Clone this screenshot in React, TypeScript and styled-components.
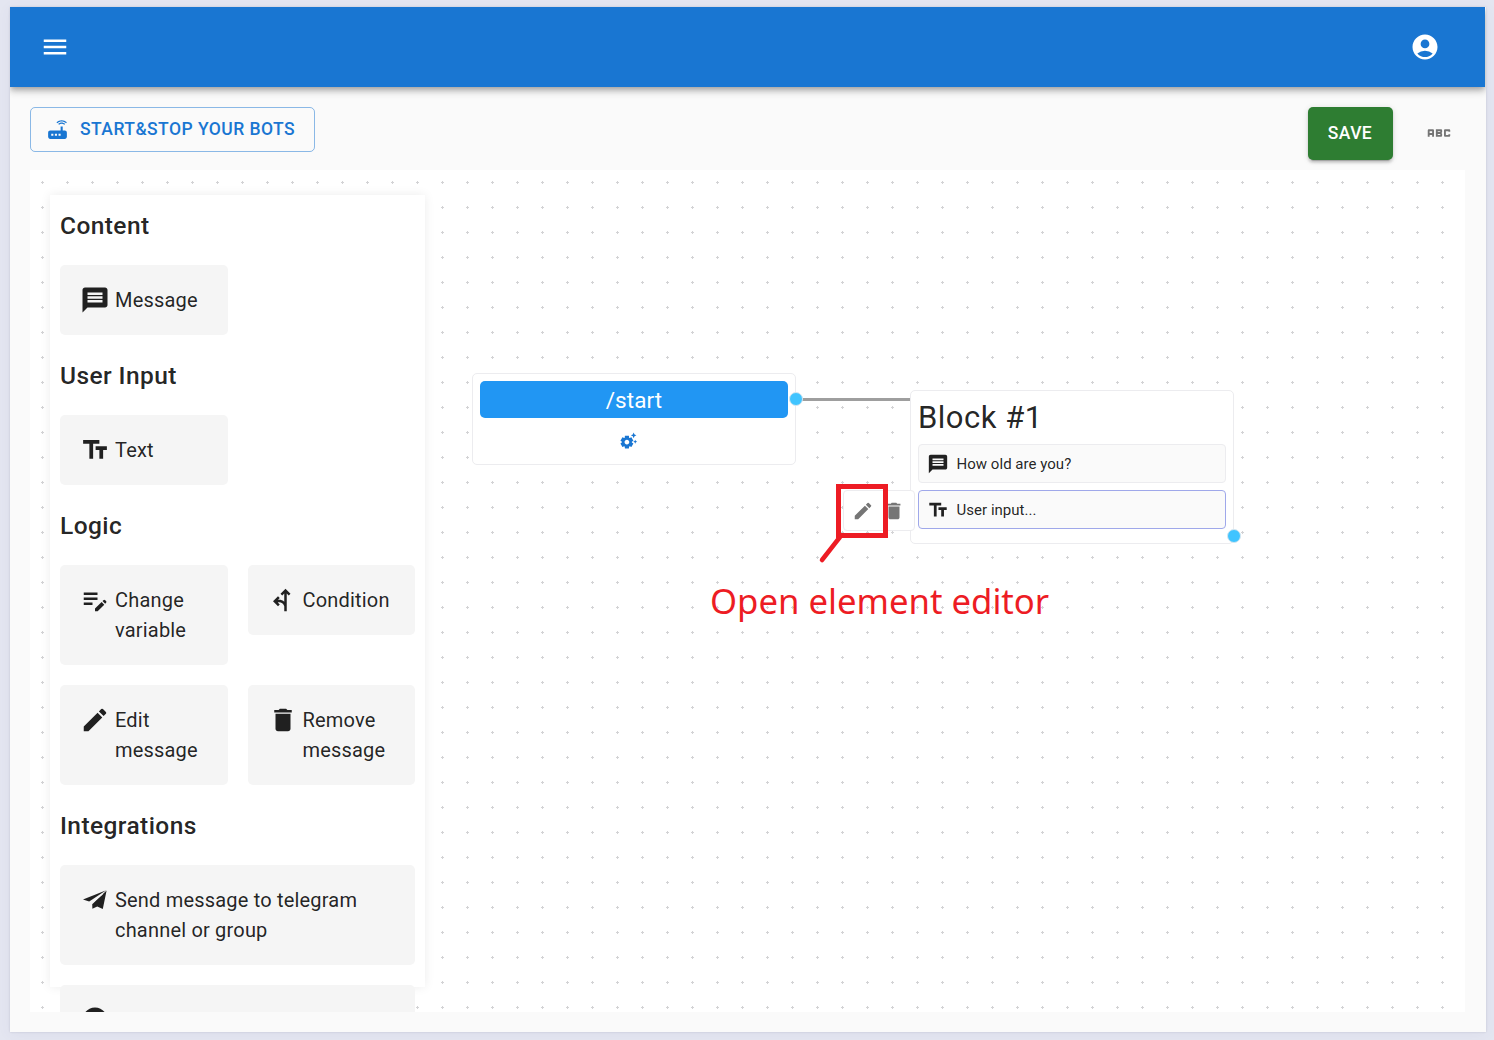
import React from 'react';
import styled, { createGlobalStyle } from 'styled-components';
import {
  MdMenu, MdAccountCircle, MdRouter, MdAbc, MdMessage, MdTextFields, MdEditNote,
  MdForkLeft, MdEdit, MdDelete, MdSettingsSuggest, MdError,
} from 'react-icons/md';

const GlobalStyle = createGlobalStyle`
  *, *::before, *::after { box-sizing: border-box; }
  html, body { margin: 0; height: 100%; }
  body {
    font-family: Roboto, "Liberation Sans", sans-serif;
    color: rgba(0, 0, 0, 0.87);
    overflow: hidden;
  }
  svg { display: block; flex: none; }
`;

const Page = styled.div`
  width: 1494px;
  height: 1040px;
  padding: 7px 8px 8px 10px;
  background: #e4e6f1;
  overflow: hidden;
`;

const Frame = styled.div`
  height: 1025px;
  display: flex;
  flex-direction: column;
  overflow: hidden;
  background: #fafafa;
  box-shadow: 0 0 2px rgba(90, 90, 120, 0.22), 0 2px 14px rgba(90, 90, 140, 0.06);
`;

const AppBar = styled.header`
  height: 80px;
  flex: none;
  margin-right: 1px;
  padding: 0 45px 0 30px;
  display: flex;
  align-items: center;
  justify-content: space-between;
  color: #fff;
  background: #1976d2;
  box-shadow: 0 2.5px 5px -1px rgba(0, 0, 0, 0.2), 0 5px 6px rgba(0, 0, 0, 0.14), 0 1px 12px rgba(0, 0, 0, 0.12);
`;

const Toolbar = styled.div`
  flex: none;
  height: 83px;
  padding: 20px 20px 0;
  display: flex;
  align-items: flex-start;
  justify-content: space-between;
`;

const OutlinedButton = styled.button`
  height: 45px;
  width: 285px;
  padding: 0 0 0 14px;
  display: flex;
  align-items: center;
  gap: 10px;
  border: 1px solid rgba(25, 118, 210, 0.5);
  border-radius: 5px;
  background: transparent;
  color: #1976d2;
  font: 500 17.5px/43px Roboto, sans-serif;
  letter-spacing: 0.45px;
  white-space: nowrap;
`;

const ToolbarActions = styled.div`
  display: flex;
  align-items: center;
  gap: 31px;
  padding-right: 12px;
`;

const SaveButton = styled.button`
  width: 85px;
  height: 53px;
  padding: 0 1px 0 0;
  border: 0;
  border-radius: 5px;
  background: #2e7d32;
  color: #fff;
  font: 500 17.5px/51px Roboto, sans-serif;
  letter-spacing: 0.4px;
  box-shadow: 0 4px 1px -3px rgba(0, 0, 0, 0.2), 0 2.5px 2.5px rgba(0, 0, 0, 0.14), 0 1px 6px rgba(0, 0, 0, 0.12);
`;

const VariablesButton = styled.span`
  display: inline-flex;
  padding-bottom: 2px;
  color: #757575;
`;

const Canvas = styled.main`
  position: relative;
  flex: none;
  width: 1435px;
  height: 842px;
  margin-left: 20px;
  padding: 25px 20px;
  overflow: hidden;
  background: #fff;
`;

const DotGrid = styled.svg`
  position: absolute;
  inset: 0;
  width: 100%;
  height: 100%;
`;

const Palette = styled.aside`
  position: relative;
  width: 375px;
  height: 792px;
  padding: 10px;
  background: #fff;
  box-shadow: 0 0 10px rgba(0, 0, 0, 0.08);
`;

const SectionTitle = styled.h2`
  margin: 0;
  height: 40px;
  font: 500 24.5px/41px Roboto, sans-serif;
  letter-spacing: 0.42px;
`;

const Section = styled.section`
  margin-bottom: 20px;
`;

const Tiles = styled.div`
  display: grid;
  grid-template-columns: 1fr 1fr;
  gap: 20px;
  align-items: start;
  padding-top: 20px;
`;

const Tile = styled.div<{ $wide?: boolean }>`
  grid-column: ${(p) => (p.$wide ? '1 / -1' : 'auto')};
  display: flex;
  gap: 5px;
  padding: 20px;
  border-radius: 5px;
  background: #f5f5f5;
`;

const TileIcon = styled.span`
  display: flex;
  height: 30px;
  align-items: center;
`;

const TileLabel = styled.span`
  font-size: 20px;
  line-height: 30px;
  letter-spacing: 0.19px;
`;

const Node = styled.div<{ $x: number; $y: number; $w: number; $h: number }>`
  position: absolute;
  left: ${(p) => p.$x}px;
  top: ${(p) => p.$y}px;
  width: ${(p) => p.$w}px;
  height: ${(p) => p.$h}px;
  padding: 7px;
  border: 1px solid #ececef;
  border-radius: 5px;
  background: #fff;
`;

const StartLabel = styled.div`
  height: 37px;
  border-radius: 5px;
  background: #2196f3;
  color: #fff;
  text-align: center;
  font-size: 22.5px;
  line-height: 39px;
  letter-spacing: 0.1px;
`;

const StartSettings = styled.div`
  display: flex;
  justify-content: center;
  padding: 13px 12px 0 0;
  color: #1976d2;
`;

const BlockTitle = styled.h3`
  margin: 0;
  height: 46px;
  font-size: 31px;
  font-weight: 400;
  line-height: 40px;
  letter-spacing: 0.5px;
`;

const BlockItem = styled.div<{ $selected?: boolean }>`
  height: 39px;
  margin-bottom: 7px;
  padding: 0 8px;
  display: flex;
  align-items: center;
  gap: 7.5px;
  border: 1px solid ${(p) => (p.$selected ? '#9fa8ea' : '#ececef')};
  border-radius: 4px;
  background: #fafafa;
  font-size: 15px;
  letter-spacing: 0.03px;
`;

const Port = styled.span<{ $x: number; $y: number }>`
  position: absolute;
  left: ${(p) => p.$x}px;
  top: ${(p) => p.$y}px;
  width: 14px;
  height: 14px;
  border: 1px solid #d4e6f0;
  border-radius: 50%;
  background: #40c4ff;
`;

const Edge = styled.span`
  position: absolute;
  left: 772px;
  top: 228px;
  width: 109px;
  height: 3px;
  background: #9e9e9e;
`;

const ItemActions = styled.div`
  position: absolute;
  left: 813px;
  top: 320px;
  width: 72px;
  height: 41px;
  padding-left: 8px;
  display: flex;
  align-items: center;
  gap: 9px;
  border: 1px solid #ececef;
  border-radius: 4px;
  background: #fff;
  color: #757575;
`;

const Highlight = styled.span`
  position: absolute;
  left: 806px;
  top: 314px;
  width: 52px;
  height: 54px;
  border: 5px solid #ed1c24;
`;

const Pointer = styled.svg`
  position: absolute;
  left: 786px;
  top: 362px;
`;

const Caption = styled.p`
  position: absolute;
  left: 680px;
  top: 407px;
  margin: 0;
  color: #ed1c24;
  font: 400 34.7px/48px "Noto Sans", "Open Sans", sans-serif;
  white-space: nowrap;
`;

const PaperPlane = () => (
  <svg width="30" height="30" viewBox="0 0 30 30" fill="currentColor">
    <path d="M3 14.4L26.2 5.2L9.2 16.6Z" />
    <path d="M26.6 5.4L22.8 24L17.2 21.4L12.4 23.8L12.2 18.6L22.8 8.2L9.6 17.6Z" fill="none" />
    <path d="M26.6 5.4L22.8 24L17.2 21.4L12.4 23.8L12.2 19.2Z" />
    <path d="M22.4 9L11 18.2" stroke="#f5f5f5" strokeWidth="1.3" />
  </svg>
);

type Item = { label: string; icon: React.ReactNode; wide?: boolean };

const sections: { title: string; items: Item[] }[] = [
  { title: 'Content', items: [{ label: 'Message', icon: <MdMessage size={30} /> }] },
  { title: 'User Input', items: [{ label: 'Text', icon: <MdTextFields size={30} /> }] },
  {
    title: 'Logic',
    items: [
      { label: 'Change variable', icon: <MdEditNote size={30} /> },
      { label: 'Condition', icon: <MdForkLeft size={30} /> },
      { label: 'Edit message', icon: <MdEdit size={30} /> },
      { label: 'Remove message', icon: <MdDelete size={30} /> },
    ],
  },
  {
    title: 'Integrations',
    items: [
      { label: 'Send message to telegram channel or group', icon: <PaperPlane />, wide: true },
      { label: '', icon: <MdError size={30} />, wide: true },
    ],
  },
];

export default function App() {
  return (
    <>
      <GlobalStyle />
      <Page>
        <Frame>
          <AppBar>
            <MdMenu size={30} />
            <MdAccountCircle size={30} />
          </AppBar>
          <Toolbar>
            <OutlinedButton>
              <MdRouter size={25} />
              START&amp;STOP YOUR BOTS
            </OutlinedButton>
            <ToolbarActions>
              <SaveButton>SAVE</SaveButton>
              <VariablesButton><MdAbc size={30} /></VariablesButton>
            </ToolbarActions>
          </Toolbar>
          <Canvas>
            <DotGrid>
              <defs>
                <pattern id="grid" width="25" height="25" patternUnits="userSpaceOnUse">
                  <path d="M11 12h3v1h-3zM12 11h1v3h-1z" fill="#d3d3d5" />
                </pattern>
              </defs>
              <rect width="100%" height="100%" fill="url(#grid)" />
            </DotGrid>
            <Palette>
              {sections.map((s) => (
                <Section key={s.title}>
                  <SectionTitle>{s.title}</SectionTitle>
                  <Tiles>
                    {s.items.map((it, i) => (
                      <Tile key={i} $wide={it.wide}>
                        <TileIcon>{it.icon}</TileIcon>
                        <TileLabel>{it.label}</TileLabel>
                      </Tile>
                    ))}
                  </Tiles>
                </Section>
              ))}
            </Palette>
            <Edge />
            <Node $x={442} $y={203} $w={324} $h={92}>
              <StartLabel>/start</StartLabel>
              <StartSettings><MdSettingsSuggest size={19} /></StartSettings>
            </Node>
            <Node $x={880} $y={220} $w={324} $h={154}>
              <BlockTitle>Block #1</BlockTitle>
              <BlockItem><MdMessage size={22} />How old are you?</BlockItem>
              <BlockItem $selected><MdTextFields size={22} />User input...</BlockItem>
            </Node>
            <Port $x={759} $y={222.4} />
            <Port $x={1197.4} $y={359} />
            <ItemActions>
              <MdEdit size={22} />
              <MdDelete size={22} />
            </ItemActions>
            <Highlight />
            <Pointer width="30" height="34">
              <path d="M24 5L6 28" stroke="#ed1c24" strokeWidth="4.5" strokeLinecap="round" />
            </Pointer>
            <Caption>Open element editor</Caption>
          </Canvas>
        </Frame>
      </Page>
    </>
  );
}
